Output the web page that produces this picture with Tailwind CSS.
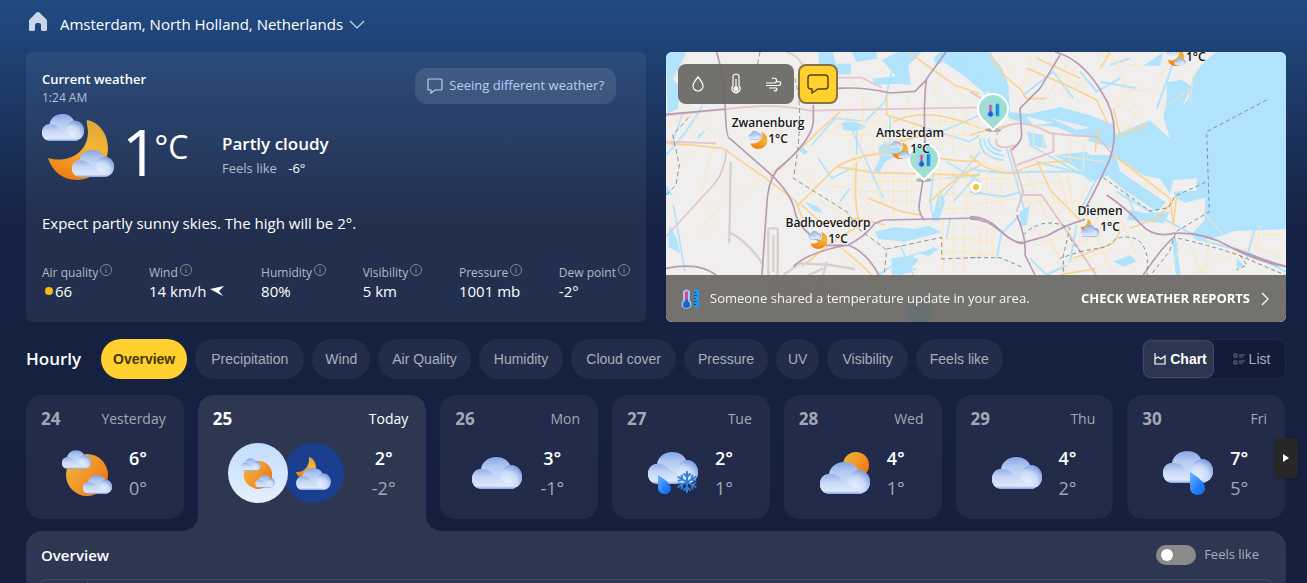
<!DOCTYPE html>
<html lang="en">
<head>
    <meta charset="UTF-8">
    <meta name="viewport" content="width=device-width, initial-scale=1.0">
    <title>Weather in Amsterdam</title>
    <script src="https://cdn.jsdelivr.net/npm/@tailwindcss/browser@4"></script>
</head>
<body class="bg-[#161f3f] font-['Open_Sans',sans-serif] text-white">

    <!-- Shared weather icons -->
    <svg class="absolute size-0" aria-hidden="true">
        <defs>
            <linearGradient id="cloudFill" x1="0" y1="0" x2="0" y2="1">
                <stop offset="0" stop-color="#86a3e6"/>
                <stop offset=".3" stop-color="#b3c9f2"/>
                <stop offset=".6" stop-color="#c9daf6"/>
                <stop offset=".88" stop-color="#dbe8fc"/>
                <stop offset="1" stop-color="#7f9fe6"/>
            </linearGradient>
            <radialGradient id="lobeFill" cx=".35" cy=".75" r=".75">
                <stop offset="0" stop-color="#e6f0ff"/>
                <stop offset=".6" stop-color="#cbdbf7"/>
                <stop offset="1" stop-color="#829fe2"/>
            </radialGradient>
            <linearGradient id="leftLobe" x1="0" y1="0" x2="0" y2="1">
                <stop offset="0" stop-color="#93aee8"/>
                <stop offset=".4" stop-color="#c6d7f6"/>
                <stop offset=".85" stop-color="#dce9fd"/>
                <stop offset="1" stop-color="#84a3e6"/>
            </linearGradient>
            <linearGradient id="moonFill" x1=".7" y1="0" x2=".4" y2="1">
                <stop offset="0" stop-color="#dfa63c"/>
                <stop offset=".4" stop-color="#f2b632"/>
                <stop offset="1" stop-color="#f07d14"/>
            </linearGradient>
            <linearGradient id="sunFill" x1="0" y1=".2" x2="1" y2=".8">
                <stop offset="0" stop-color="#eeb336"/>
                <stop offset=".5" stop-color="#f2962a"/>
                <stop offset="1" stop-color="#ee7210"/>
            </linearGradient>
            <linearGradient id="dropFill" x1="0" y1="0" x2="1" y2="1">
                <stop offset="0" stop-color="#6fb4f8"/>
                <stop offset=".6" stop-color="#2280fb"/>
                <stop offset="1" stop-color="#0f62f0"/>
            </linearGradient>
        </defs>
        <symbol id="cloud" viewBox="0 0 50 32">
            <path fill="url(#cloudFill)" d="M10 32C4 32 0 28 0 22s4-10 9-10C10 5 16 0 24 0c7 0 12 3 14 8 7 0 12 5 12 12s-5 12-12 12z"/>
            <path fill="url(#lobeFill)" d="M28 20c1-7 5-12 11-12 6 0 11 5 11 12s-5 11-11 11H26z"/>
            <path fill="url(#leftLobe)" d="M10 32C4 32 0 28 0 22s4-10 10-10c5 0 9 2 11 5l7 5 15 9c-2 1-3 1-5 1z"/>
        </symbol>
        <symbol id="partly-night" viewBox="0 0 72 66">
            <path fill="url(#moonFill)" d="M45 6c12 2 21 14 21 28 0 18-14 32-31 32C21 66 10 57 6 44c21 6 40-6 40-26 0-5-2-9-1-12z"/>
            <use href="#cloud" x="0" y="0" width="42" height="27"/>
            <use href="#cloud" x="30" y="36" width="42" height="27"/>
        </symbol>
        <symbol id="mostly-clear-night" viewBox="0 0 72 66">
            <path fill="url(#moonFill)" d="M48 4c12 3 22 14 22 29 0 19-14 33-33 33C23 66 12 58 8 46c20 2 38-8 42-24 1-7 0-12-2-18z"/>
            <use href="#cloud" x="0" y="0" width="48" height="31"/>
        </symbol>
        <symbol id="partly-day" viewBox="0 0 50 46">
            <circle cx="25" cy="25" r="21" fill="url(#sunFill)"/>
            <use href="#cloud" x="0" y="0" width="29" height="19"/>
            <use href="#cloud" x="21" y="25" width="29" height="19"/>
        </symbol>
        <symbol id="cloudy-night" viewBox="0 0 35 33">
            <path fill="url(#moonFill)" d="M13 0c5 2 7 6 7 11 0 6-5 10-11 10-4 0-8-2-9-6 8 1 14-6 13-15z"/>
            <use href="#cloud" x="0" y="11" width="35" height="22"/>
        </symbol>
        <symbol id="cloudy-day" viewBox="0 0 50 42">
            <circle cx="36" cy="13" r="13" fill="url(#sunFill)"/>
            <use href="#cloud" x="0" y="10" width="50" height="32"/>
        </symbol>
        <symbol id="sleet" viewBox="0 0 50 43">
            <use href="#cloud" x="0" y="0" width="50" height="32"/>
            <path fill="url(#dropFill)" d="M10 23q13 8 13 13c0 4-3 6-6 6s-7-2-7-6z"/>
            <g stroke="#2f7fd6" stroke-width="2" stroke-linecap="round" fill="none">
                <path id="flakeArm" d="M39 20v20M36 22l3 3 3-3M36 38l3-3 3 3"/>
                <use href="#flakeArm" transform="rotate(60 39 30)"/>
                <use href="#flakeArm" transform="rotate(120 39 30)"/>
            </g>
        </symbol>
        <symbol id="rain" viewBox="0 0 50 44">
            <use href="#cloud" x="0" y="0" width="50" height="32"/>
            <path fill="url(#dropFill)" d="M27 21q15 9 15 16c0 4-3 7-7 7s-8-3-8-7z"/>
        </symbol>
        <symbol id="info" viewBox="0 0 12 12">
            <circle cx="6" cy="6" r="5.5" fill="none" stroke="currentColor"/>
            <path d="M6 5v4M6 3v1" stroke="currentColor"/>
        </symbol>
        <symbol id="thermo-ruler" viewBox="0 0 20 22">
            <path d="M3 4a4 4 0 0 1 7 0v9a5 5 0 1 1-7 0z" fill="#9cc7fa"/>
            <circle cx="6.5" cy="17" r="3.5" fill="#1b62c9"/>
            <path d="M6.5 4v8" stroke="#e0457e" stroke-width="3"/>
            <path d="M6.5 12v4" stroke="#1b62c9" stroke-width="3"/>
            <path d="M14 2h5v18h-5z" fill="#1b9bf0"/>
            <path d="M14 5h2M14 8h3M14 11h2M14 14h3M14 17h2" stroke="#0b4fa5"/>
        </symbol>
        <symbol id="pin" viewBox="0 0 32 40">
            <ellipse cx="16" cy="37" rx="8" ry="2" fill="#777" opacity=".5"/>
            <path d="M16 37L4 25a15 15 0 1 1 24 0z" fill="#9fdfd3" stroke="#fff" stroke-width="2"/>
            <use href="#thermo-ruler" x="9" y="9" width="14" height="16"/>
        </symbol>
    </svg>

    <main class="min-h-screen flex flex-col pl-[26px] pr-[21px] bg-linear-to-b from-[#204b83] via-[#162344] via-[220px] to-[#161e3e] to-[583px]">

        <!-- Location -->
        <header class="h-[52px] pb-1 flex items-center gap-3 px-[2px]">
            <a href="#" aria-label="Home" class="-mt-1">
                <svg class="w-5 h-5" viewBox="0 0 20 20" fill="#c9d6ec"><path d="M10 0q1 0 2 1l6 6q1 1 1 2v9q0 1-2 1h-2q-2 0-2-1v-5q0-2-2-2H9q-2 0-2 2v5q0 1-2 1H3q-2 0-2-1V9q0-1 1-2l6-6q1-1 2-1z"/></svg>
            </a>
            <button class="flex items-center gap-1.5 text-[15px]">
                Amsterdam, North Holland, Netherlands
                <svg class="w-4 h-4" viewBox="0 0 16 16" fill="none" stroke="#c9d6ec" stroke-width="1.2"><path d="M1 5l7 7 7-7"/></svg>
            </button>
        </header>

        <section class="grid grid-cols-2 gap-5">
            <!-- Current conditions -->
            <div class="h-[270px] rounded-md bg-white/6 px-4 pt-4 flex flex-col">
                <div class="flex justify-between">
                    <div>
                        <h2 class="text-[13px] leading-[22px] font-semibold">Current weather</h2>
                        <p class="text-xs leading-4 text-[#b3c0d8]">1:24 AM</p>
                    </div>
                    <button class="h-9 mr-3.5 px-3 flex items-center gap-1.5 rounded-xl bg-white/10 text-[13px] text-[#b4cffa]">
                        <svg class="w-4 h-4" viewBox="0 0 16 16" fill="none" stroke="currentColor" stroke-width="1.2"><path d="M2 1h12q1 0 1 1v9q0 1-1 1H8l-4 3v-3H2q-1 0-1-1V2q0-1 1-1z"/></svg>
                        Seeing different weather?
                    </button>
                </div>
                <div class="mt-2 flex">
                    <svg class="w-[72px] h-[66px]"><use href="#partly-night"/></svg>
                    <p class="ml-2 w-[100px] flex text-[64px] leading-[76px] font-medium">1<span class="-ml-1 text-[32px] leading-[66px] font-normal">°C</span></p>
                    <div class="pt-4">
                        <p class="text-[17px] leading-7 font-semibold">Partly cloudy</p>
                        <p class="text-[13px] leading-5 text-[#b3bccd]">Feels like <span class="ml-2 text-white">-6°</span></p>
                    </div>
                </div>
                <p class="mt-[21px] text-[15px] leading-6">Expect partly sunny skies. The high will be 2°.</p>
                <dl class="mt-[29px] flex justify-between text-[15px] leading-5">
                    <div>
                        <dt class="flex gap-0.5 text-xs leading-[17px] text-[#b3b9c8]">Air quality <svg class="size-3 text-[#8089a0]"><use href="#info"/></svg></dt>
                        <dd class="flex items-center gap-0.5 pl-[3px]"><span class="size-2 rounded-full bg-[#fcb813]"></span>66</dd>
                    </div>
                    <div>
                        <dt class="flex gap-0.5 text-xs leading-[17px] text-[#b3b9c8]">Wind <svg class="size-3 text-[#8089a0]"><use href="#info"/></svg></dt>
                        <dd class="flex items-center gap-1">14 km/h <svg class="w-3.5 h-2.5" viewBox="0 0 14 10" fill="#fff"><path d="M0 3l14-3-5 5 4 5z"/></svg></dd>
                    </div>
                    <div>
                        <dt class="flex gap-0.5 text-xs leading-[17px] text-[#b3b9c8]">Humidity <svg class="size-3 text-[#8089a0]"><use href="#info"/></svg></dt>
                        <dd>80%</dd>
                    </div>
                    <div>
                        <dt class="flex gap-0.5 text-xs leading-[17px] text-[#b3b9c8]">Visibility <svg class="size-3 text-[#8089a0]"><use href="#info"/></svg></dt>
                        <dd>5 km</dd>
                    </div>
                    <div>
                        <dt class="flex gap-0.5 text-xs leading-[17px] text-[#b3b9c8]">Pressure <svg class="size-3 text-[#8089a0]"><use href="#info"/></svg></dt>
                        <dd>1001 mb</dd>
                    </div>
                    <div>
                        <dt class="flex gap-0.5 text-xs leading-[17px] text-[#b3b9c8]">Dew point <svg class="size-3 text-[#8089a0]"><use href="#info"/></svg></dt>
                        <dd>-2°</dd>
                    </div>
                </dl>
            </div>

            <!-- Map -->
            <div class="relative h-[270px] rounded-md overflow-hidden bg-[#f1efed] flex flex-col justify-between">
                <svg class="absolute inset-0 size-full" viewBox="0 0 1860 810" preserveAspectRatio="xMidYMid slice" fill="none" stroke-linejoin="round">
                    <!-- west side -->
                    <g transform="translate(-18 -21)">
                        <g fill="#b1e3fc">
                            <path d="M18 21h60l-20 50-20 30 25 30-10 60-30 15zM476 21h42l10 35h45v32h-50l-47-5zM575 21h75v20l-60 10zM665 45l50-24h70l-40 40 8 60-35-5-75 5-5-20 70-8zM840 21h140v130l-70-60-60-40-20 10-10-20zM18 420l20 30-20 0zM28 540l22 40 10 45-35-20z"/>
                            <path d="M115 270l25-17-30 34zM420 300l25 20-10 10-20-15zM640 380l20-40-5-30 20-20 50 10-10 30-40 20-15 30zM645 560l60-14 60 6 40-10 40 20-70 18-40 10-80-8zM695 640l60-8 20 12-30 40-50 5zM780 625l40-18 14 6-30 22zM435 470l40 15 15 20-30-8zM545 235l30-10 45 20-30 14-40-4z"/>
                            <path d="M840 430l15 40-20 60-20-5zM740 780l30-20 60 10-30 60h-60z"/>
                        </g>
                        <g stroke="#b1e3fc" stroke-width="5">
                            <path d="M18 330q60-60 110-150M40 480l35 200M70 200l-35 100M455 300l70-80 90 10 60-60 20-90M560 220l110 240M820 270l140-60M800 250l130 40 30-20M830 310l-20 160 10 50M830 480l130-160M850 400l110-10M860 350l100 60M475 340l40 60 60-30M540 470l30-40M870 520l-10 60M720 600l40 90M700 650l90-30M690 700l80-30M640 700l60-40M880 470l80-90M590 250v80M690 210v90"/>
                        </g>
                        <g stroke="#fbe6ba" stroke-width="3">
                            <path d="M18 110l60-60M18 240l80-30 70 60-50 190 60 60-60 60M240 420l-110 120M320 360l-80 120-40-40M18 390l90-70M430 370l40 60M505 270l70-70M540 190v80h100v60h110M560 230h120v70M610 215l-10 100 40 40M650 230l20 60 80-10M700 200v60l50 20M580 330v130l60 70M620 340l-20 110 60 70M660 380v120M700 390v130M740 385v110M600 410h180M590 440h180M630 470h140M500 420l70 10M480 470l100 50M560 380l70-60M800 230h160M810 270h150M840 200v120M880 200v130M920 200l-20 110M820 400h140M840 370v120M880 360v150M920 350v160M820 450h140M850 490h110M850 530v155M880 530v160M910 530v155M850 580h110M850 620h110M540 620l100 90M360 600l-20 130M120 700l90 60"/>
                            <path d="M570 100l40 60v50M440 21l-20 80M620 160l40 60M740 150l30 130M840 80l-20 60 90 60M870 110l60 60"/>
                        </g>
                        <g stroke="#f8d392" stroke-width="5">
                            <path d="M18 295q90 5 170 15l130 90 90 70 20 50M745 21q70 50 140 100l75 25M680 145v65l110 35M330 400q90-90 210-200M530 365q50-30 130-40l40-30 90-25M590 350q-10 130 10 190l-80 50-95 75M415 480l60-60 55-55 110 18 320 8M425 480l60 55 110-15 80 20M625 460l100 40 55 10M545 610l60 50 55 55M700 230q100-50 260 20M800 330q70 20 160 20M810 470q70-70 150-110"/>
                        </g>
                        <g stroke="#e3c6cc" stroke-width="5">
                            <path d="M18 212q120-14 230-25t200 10l512-10M200 310q-5 70-40 110L18 575M380 21q60 20 45 75M530 98h75l60 30M18 290l150 5"/>
                        </g>
                        <g stroke="#d6d1d0" stroke-width="7">
                            <path d="M212 350l-4 245M205 560q60 30 105 100M325 550v200M325 550h28v190M340 570v110M370 690l50-35 90 5 75 12M500 650l-20 80M380 720l110-50M340 740h200"/>
                        </g>
                        <g stroke="#b79bb3" stroke-width="5">
                            <path d="M170 21q24 80 26 170t14 90l120 105q65 60 75 115t95 100l65 0q55 20 92 90M460 180v50q-5 60-110 145-28 40-30 110l-14 205M858 21l-58 80q-10 60-5 190l-4 100-14 90q0 30 18 45M530 130q80-5 160 14l75-5 35-36M18 208l180-16M400 665q45-45 165-65 50-25 80-65l25-10 290-6M18 670q100-20 150 20"/>
                        </g>
                        <g stroke="#8f9494" stroke-width="3" stroke-dasharray="14 9">
                            <path d="M18 450l30-30 10-60-20-90 55-60M300 21l-8 40M405 100q30 110-5 300l160 100 40 55 80 60-8 80M680 612l165-35v65l115-5"/>
                        </g>
                    </g>
                    <!-- east side -->
                    <g transform="translate(912 -21)">
                        <g fill="#b1e3fc">
                            <path d="M740 21q-60 40-75 90l-10 50-12 15-53-10-10 50 20 65-60-55-110 45-5 60 95 60 50 10 30 45 10-40 70-6v37l-70 3 5 18 30 15 60-15-2 70-40 40 20 20 52-10 60-20 153-5V21z"/>
                            <path d="M590 112l45-8 30 20-25 52-50-8zM520 62l60-40-10 40z"/>
                            <path d="M-70 21h125l40 45 20 55 5 80 60 5 90-20 90 25 75 30-5 70-80-25-90-40-75-5-65-20-50-60-60-80zM170 260l50 10 10 40-50-10zM250 330l100-10 70 70-60 20-40-40zM340 330l90 0 30 40 130 100-30 30-110-75-80-70zM480 495l50 10 70-5-20 35-110-10zM150 500l30-20-10 60-20 5z"/>
                            <path d="M605 580l12 0 15 110h-14zM800 640l20 20-20 15zM430 650l50-20 20 20-40 15z"/>
                        </g>
                        <g fill="#f1efed">
                            <path d="M170 215l80 18-60 8zM240 218l120 30-40 6zM440 340l160 110-10 24-140-95zM250 258l110 20-20 20-90-10z"/>
                        </g>
                        <g stroke="#b1e3fc" stroke-width="6">
                            <path d="M30 280q0 60 70 65M42 280q2 45 60 52M55 280q2 32 40 38M110 310l30 100 30 110M0 370q80 20 180 10l260 0M0 440l100 15 60-15M180 300l140 80M100 560l60-60M95 560l-15 80M200 350l150 40M160 150l90-70 60 80M390 110l110 20M560 190l30-80 20-60M330 80l50 60 70-40M420 60l60-20M460 420l40 100M540 500l170 90 120 30 118 60M860 530l-30 110M380 400l-50 100M180 640l50 50 60-30M200 700l30 100M320 540l-20 110M620 590v90M440 440l100 60"/>
                        </g>
                        <g stroke="#fbe6ba" stroke-width="3">
                            <path d="M80 30l50 60M180 21v60l-40 60M290 60l-60 100M320 60l-50 90M350 90l-60 70M250 80l100 50M420 21l70 140M380 21q60 40 130 40M440 120q50 30 110 10M400 160l100 50-40 60M460 150l60 60M560 110l40-60 60-20M670 80l-10 100M660 130l-80 60M0 240l80 20M0 300l100 60M0 340l120 40M20 400h120M0 480l140-20M50 370v120M90 360v140M120 400l80 100M170 380l60 140M210 360l60 150M250 340l50 170M290 380l20 120M150 420l150-10M160 470l180 0M250 330l150 20M190 260v60M220 260v70M300 280v100M340 290v90M360 400l-40 90M470 350l40 50M500 370l-20 30M540 400l-20 30M570 430l-20 30M0 550h70v80H0M30 550v80M50 550v80M0 590h70M180 540l100 100M200 600l120-40M230 560l60 130M290 600l110-30M340 500l60 120 30 80M400 480l-60 130M440 500l60 130M280 660l160-50M640 590l-50 100M660 600l40 90M720 580l-20 110M760 590l60 50M660 690l170-80M840 600l100 40M840 570h100M870 540l-10 80M700 500l60 70"/>
                        </g>
                        <g stroke="#f8d392" stroke-width="5">
                            <path d="M60 21q20 60 90 110l20 30 60 0M170 70l140 60 70 35 35 75M200 40l130 60M385 250l-10 70M0 270q60-20 120-30M0 330q40 50 130 55 70-40 160-35M200 345l40 90 90 90M430 330l170 130 10 80M610 470l-50 50-80 30M310 640l120-45 20-35M270 690l110-20M620 450l-10 90M420 21l-30 50M430 190l20 80 80-30"/>
                        </g>
                        <g stroke="#e3c6cc" stroke-width="6">
                            <path d="M80 270q10-30 70-35 50 5 90 30 100 10 140 10 40 40 50 60M120 310l40 130-20 60M140 360l110-40v-60M80 280q-10 40 60 20M160 450h55l90 130 100 150M0 140l50 30"/>
                        </g>
                        <g stroke="#b79bb3" stroke-width="5">
                            <path d="M270 30l-60 100-60 60 5 80q0 20-30 45M255 21q80 20 140 120 60 90 25 200-50 110-75 150M0 515q50 0 90 40t70 38l70-20q60-35 115-50M0 522q50 0 90 36t70 38M140 510q30 70 25 120l30 60M410 450q60 40 100 85t100 30q90-5 170 40t168 60M520 690q60-90 95-115M950 665q-70-20-160-55"/>
                        </g>
                        <g stroke="#7f9298" stroke-width="3" stroke-dasharray="12 9">
                            <path d="M890 165l-180 95 8 240-100 60-20 60-60 75M400 398l140 100 55-10 20-35 100-45M0 638h90l70 30M160 570q60-60 140-20l-20 80 0 60M300 580l30 40-60 20M330 620l80-15 30-25q80-20 92 60v50M625 580q90 20 180 50l140 60M810 630l20 30-30 15"/>
                        </g>
                    </g>
                </svg>

                <!-- Report pins -->
                <svg class="absolute left-[311px] top-[41px] w-8 h-10"><use href="#pin"/></svg>
                <svg class="absolute left-[242px] top-[91px] w-8 h-10"><use href="#pin"/></svg>
                <span class="absolute left-[304px] top-[129px] size-3 rounded-full border-3 border-white bg-[#f5c62e] shadow"></span>

                <!-- Map labels -->
                <div class="absolute inset-0 text-xs leading-4 font-semibold text-[#141414] [text-shadow:0_0_2px_#fff]">
                    <div class="absolute left-[102px] top-[63px] -translate-x-1/2 w-24 flex flex-col items-center">Zwanenburg
                        <span class="flex"><svg class="w-5 h-[18px]"><use href="#mostly-clear-night"/></svg>1°C</span>
                    </div>
                    <div class="absolute left-[244px] top-[73px] -translate-x-1/2 w-24 flex flex-col items-center">Amsterdam
                        <span class="flex"><svg class="w-5 h-[18px]"><use href="#partly-night"/></svg>1°C</span>
                    </div>
                    <div class="absolute left-[162px] top-[163px] -translate-x-1/2 w-24 flex flex-col items-center">Badhoevedorp
                        <span class="flex"><svg class="w-5 h-[18px]"><use href="#mostly-clear-night"/></svg>1°C</span>
                    </div>
                    <div class="absolute left-[434px] top-[151px] -translate-x-1/2 w-24 flex flex-col items-center">Diemen
                        <span class="flex"><svg class="w-5 h-[18px]"><use href="#cloudy-night"/></svg>1°C</span>
                    </div>
                    <span class="absolute left-[500px] top-0 flex items-start leading-[10px]"><svg class="-mt-1 w-5 h-[18px]"><use href="#partly-night"/></svg>1°C</span>
                </div>

                <div class="relative flex gap-1 p-3">
                    <div class="h-10 px-1 flex items-center rounded-lg bg-[#6b6966]/95">
                        <button aria-label="Precipitation" class="w-8 flex justify-center"><svg class="w-3.5 h-[18px]" viewBox="0 0 14 18" fill="none" stroke="#fff" stroke-width="1.2"><path d="M7 2Q2 8 2 11a5 5 0 0 0 10 0Q12 8 7 2z"/></svg></button>
                        <button aria-label="Temperature" class="w-11 flex justify-center"><svg class="w-3 h-[22px]" viewBox="0 0 12 22" fill="none" stroke="#fff" stroke-width="1.2"><path d="M3 4a3 3 0 0 1 6 0v9a4 4 0 1 1-6 0z"/><path d="M6 6v9" /><circle cx="6" cy="16" r="2" fill="#fff"/></svg></button>
                        <button aria-label="Wind" class="w-8 flex justify-center"><svg class="w-[18px] h-4" viewBox="0 0 18 16" fill="none" stroke="#fff" stroke-width="1.2"><path d="M1 7h8a2.500 2.500 0 1 0-2-4M1 9.500h13a2 2 0 1 0-2-3M4 12h6a1.500 1.500 0 1 1-1 2"/></svg></button>
                    </div>
                    <button aria-label="Weather reports" class="size-10 flex items-center justify-center rounded-lg border-2 border-[#857544] bg-[#ffd02e]">
                        <svg class="w-[22px] h-5" viewBox="0 0 22 20" fill="none" stroke="#574410" stroke-width="1.5"><path d="M4 1h14q3 0 3 3v8q0 3-3 3h-7l-6 4v-4H4q-3 0-3-3V4q0-3 3-3z"/></svg>
                    </button>
                </div>

                <div class="relative h-[47px] px-3.5 flex items-center text-[13px] bg-[#55524e]/80 backdrop-blur-[3px]">
                    <svg class="w-5 h-[23px] mr-2.5"><use href="#thermo-ruler"/></svg>
                    <p class="grow text-[#f5f5f5]">Someone shared a temperature update in your area.</p>
                    <a href="#" class="flex items-center gap-2 font-bold">CHECK WEATHER REPORTS
                        <svg class="w-3.5 h-3.5" viewBox="0 0 14 14" fill="none" stroke="#fff" stroke-width="1.2"><path d="M4 1l6 6-6 6"/></svg>
                    </a>
                </div>
            </div>
        </section>

        <!-- Hourly tabs -->
        <section class="mt-[17px] h-10 flex items-center">
            <h2 class="w-[75px] text-[17px] font-semibold">Hourly</h2>
            <nav class="flex gap-2 grow font-['Liberation_Sans',sans-serif] text-sm text-[#a9aebc]">
                <button class="h-10 px-3 rounded-full bg-[#ffd02e] text-[#44370c] font-bold">Overview</button>
                <button class="h-10 px-4 rounded-full bg-white/5">Precipitation</button>
                <button class="h-10 px-[13px] rounded-full bg-white/5">Wind</button>
                <button class="h-10 px-3.5 rounded-full bg-white/5">Air Quality</button>
                <button class="h-10 px-[15px] rounded-full bg-white/5">Humidity</button>
                <button class="h-10 px-[15px] rounded-full bg-white/5">Cloud cover</button>
                <button class="h-10 px-3.5 rounded-full bg-white/5">Pressure</button>
                <button class="h-10 px-3 rounded-full bg-white/5">UV</button>
                <button class="h-10 px-[15px] rounded-full bg-white/5">Visibility</button>
                <button class="h-10 px-3.5 rounded-full bg-white/5">Feels like</button>
            </nav>
            <div class="h-10 flex rounded-lg border border-white/6 bg-[#121b37] font-['Liberation_Sans',sans-serif] text-sm">
                <button class="w-[71px] pl-1 flex items-center justify-center gap-1 rounded-lg border border-white/10 bg-[#2c3650] font-bold">
                    <svg class="size-3" viewBox="0 0 12 12" fill="none" stroke="#fff" stroke-width="1.2"><path d="M1 0v11h10V3L7 6 4 4 1 6"/></svg>Chart
                </button>
                <button class="w-[71px] pl-1 flex items-center justify-center gap-1 text-[#a9aebc]">
                    <svg class="size-3" viewBox="0 0 12 12" fill="none" stroke="#676f85"><path d="M1 1h3v3H1zM1 8h3v3H1zM6 2h6M6 4h4M6 8h6M6 10h4"/></svg>List
                </button>
            </div>
        </section>

        <!-- Daily cards -->
        <section class="relative mt-4 pr-px grid grid-cols-[158fr_229fr_158fr_158fr_158fr_158fr_158fr] gap-x-3.5 items-start text-[#a2a8b6]">
            <article class="h-[124px] rounded-2xl bg-white/5 pt-3">
                <div class="pl-[15px] pr-[18px] flex justify-between items-center text-sm leading-6"><b class="text-[17px] leading-6">24</b>Yesterday</div>
                <div class="mt-3 pl-9 flex items-center text-lg leading-[30px] text-center">
                    <svg class="w-[50px] h-[46px]"><use href="#partly-day"/></svg>
                    <div class="w-[52px]"><p class="text-white font-semibold">6°</p><p>0°</p></div>
                </div>
            </article>
            <article class="relative h-[136px] rounded-t-2xl bg-[#2d3751] pt-3">
                <div class="pl-[15px] pr-[18px] flex justify-between items-center text-sm leading-6 text-white"><b class="text-[17px] leading-6">25</b>Today</div>
                <div class="mt-3 pl-[30px] flex items-center text-lg leading-[30px] text-center">
                    <div class="flex">
                        <span class="relative z-10 size-[60px] rounded-full bg-linear-to-b from-[#c3dcfd] to-[#e6f0fe] flex items-center justify-center"><svg class="w-[34px] h-[31px]"><use href="#partly-day"/></svg></span>
                        <span class="-ml-1 size-[60px] rounded-full bg-[#1a3f8e] flex items-center justify-center"><svg class="w-[35px] h-[33px]"><use href="#cloudy-night"/></svg></span>
                    </div>
                    <div class="ml-3.5 w-[52px]"><p class="text-white font-semibold">2°</p><p>-2°</p></div>
                </div>
                <!-- flared corners into the panel below -->
                <span class="absolute bottom-0 -left-3.5 size-3.5 bg-[radial-gradient(circle_at_0_0,transparent_13px,#2d3751_14px)]"></span>
                <span class="absolute bottom-0 -right-3.5 size-3.5 bg-[radial-gradient(circle_at_100%_0,transparent_13px,#2d3751_14px)]"></span>
            </article>
            <article class="h-[124px] rounded-2xl bg-white/5 pt-3">
                <div class="pl-[15px] pr-[18px] flex justify-between items-center text-sm leading-6"><b class="text-[17px] leading-6">26</b>Mon</div>
                <div class="mt-3 pl-8 flex items-center text-lg leading-[30px] text-center">
                    <svg class="w-[50px] h-8"><use href="#cloud"/></svg>
                    <div class="ml-1 w-[52px]"><p class="text-white font-semibold">3°</p><p>-1°</p></div>
                </div>
            </article>
            <article class="h-[124px] rounded-2xl bg-white/5 pt-3">
                <div class="pl-[15px] pr-[18px] flex justify-between items-center text-sm leading-6"><b class="text-[17px] leading-6">27</b>Tue</div>
                <div class="mt-3 pl-9 flex items-center text-lg leading-[30px] text-center">
                    <svg class="w-[50px] h-[43px]"><use href="#sleet"/></svg>
                    <div class="w-[52px]"><p class="text-white font-semibold">2°</p><p>1°</p></div>
                </div>
            </article>
            <article class="h-[124px] rounded-2xl bg-white/5 pt-3">
                <div class="pl-[15px] pr-[18px] flex justify-between items-center text-sm leading-6"><b class="text-[17px] leading-6">28</b>Wed</div>
                <div class="mt-3 pl-9 flex items-center text-lg leading-[30px] text-center">
                    <svg class="w-[50px] h-[42px]"><use href="#cloudy-day"/></svg>
                    <div class="w-[52px]"><p class="text-white font-semibold">4°</p><p>1°</p></div>
                </div>
            </article>
            <article class="h-[124px] rounded-2xl bg-white/5 pt-3">
                <div class="pl-[15px] pr-[18px] flex justify-between items-center text-sm leading-6"><b class="text-[17px] leading-6">29</b>Thu</div>
                <div class="mt-3 pl-9 flex items-center text-lg leading-[30px] text-center">
                    <svg class="w-[50px] h-8"><use href="#cloud"/></svg>
                    <div class="w-[52px]"><p class="text-white font-semibold">4°</p><p>2°</p></div>
                </div>
            </article>
            <article class="h-[124px] rounded-2xl bg-white/5 pt-3">
                <div class="pl-[15px] pr-[18px] flex justify-between items-center text-sm leading-6"><b class="text-[17px] leading-6">30</b>Fri</div>
                <div class="mt-3 pl-9 flex items-center text-lg leading-[30px] text-center">
                    <svg class="w-[50px] h-11"><use href="#rain"/></svg>
                    <div class="w-[52px]"><p class="text-white font-semibold">7°</p><p>5°</p></div>
                </div>
            </article>
            <button aria-label="Next days" class="absolute -right-3 top-[43px] w-6 h-10 rounded bg-[#272727] flex items-center justify-center shadow">
                <svg class="w-2 h-2.5" viewBox="0 0 8 10" fill="#fff"><path d="M1 1l6 4-6 4z"/></svg>
            </button>
        </section>

        <!-- Overview panel -->
        <section class="grow rounded-t-2xl bg-[#2d3751] px-[15px] pt-3 flex flex-col">
            <div class="h-6 flex items-center justify-between text-[15px]">
                <h3 class="font-semibold">Overview</h3>
                <label class="flex items-center gap-2 pr-3 text-[13px] text-[#a9aebc]">
                    <input type="checkbox" role="switch" class="appearance-none relative w-10 h-5 rounded-full bg-[#8a8a8a] before:absolute before:left-[5px] before:top-1 before:size-3 before:rounded-full before:bg-white checked:bg-[#3f7ddb] checked:before:left-[23px]">
                    Feels like
                </label>
            </div>
            <div class="mt-3 grow flex rounded-t-lg border border-b-0 border-white/10">
                <div class="w-[46px] border-r border-white/10"></div>
            </div>
        </section>
    </main>

</body>
</html>
